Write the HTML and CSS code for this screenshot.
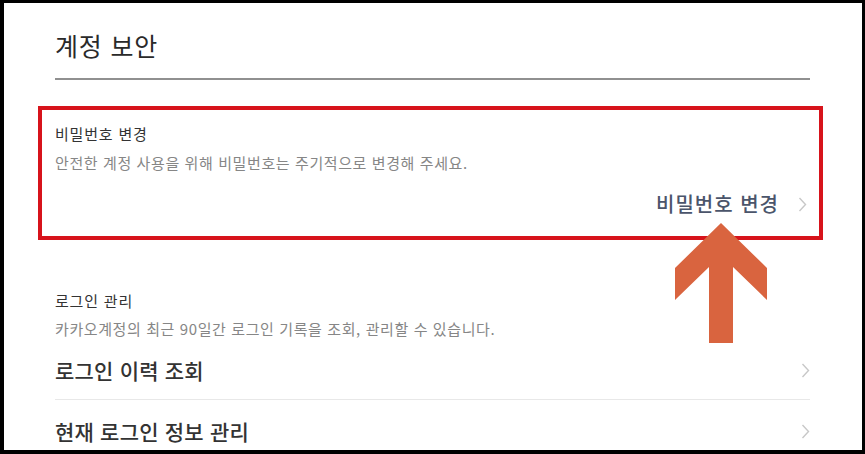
FILE: index.html
```html
<!DOCTYPE html>
<html lang="ko">
<head>
    <meta charset="UTF-8">
    <title>계정 보안</title>
    <link rel="stylesheet" href="styles.css">
</head>
<body>
    <div class="frame">
        <div class="content">
            <h2 class="title">계정 보안</h2>

            <div class="section highlight">
                <div class="label">비밀번호 변경</div>
                <p class="desc">안전한 계정 사용을 위해 비밀번호는 주기적으로 변경해 주세요.</p>
                <a class="link" href="#">
                    <span>비밀번호 변경</span>
                    <svg class="chevron" width="9" height="15" viewBox="0 0 9 15"><polyline points="1.5,1 7.5,7.5 1.5,14"/></svg>
                </a>
            </div>

            <div class="section login">
                <div class="label">로그인 관리</div>
                <p class="desc">카카오계정의 최근 90일간 로그인 기록을 조회, 관리할 수 있습니다.</p>
                <a class="row" href="#">
                    <span>로그인 이력 조회</span>
                    <svg class="chevron" width="9" height="15" viewBox="0 0 9 15"><polyline points="1.5,1 7.5,7.5 1.5,14"/></svg>
                </a>
                <a class="row" href="#">
                    <span>현재 로그인 정보 관리</span>
                    <svg class="chevron" width="9" height="15" viewBox="0 0 9 15"><polyline points="1.5,1 7.5,7.5 1.5,14"/></svg>
                </a>
            </div>
        </div>

        <svg class="arrow" width="92" height="120" viewBox="0 0 92 120">
            <polygon points="46,0 92,45 92,77 58,44 58,120 34,120 34,44 0,77 0,45"/>
        </svg>
    </div>
</body>
</html>
```

FILE: styles.css
```css
body {
    margin: 0;
    background-color: #000;
    font-family: "Noto Sans CJK KR", "Noto Sans", sans-serif;
}

.frame {
    position: relative;
    background: #fff;
    margin: 3px 3px 0 4px;
    height: 447px;
    overflow: hidden;
}

.content {
    padding: 26px 52px 0 51px;
}

.title {
    margin: 0;
    font-size: 25px;
    font-weight: 400;
    letter-spacing: 0.8px;
    line-height: 32px;
    color: #2a2a2a;
    padding-bottom: 17px;
    border-bottom: 2px solid #909090;
}

.section {
    display: flex;
    flex-direction: column;
}

.highlight {
    margin: 26px -13px 0 -17px;
    border: 4px solid #d7131b;
    padding: 14px 12px 19px 13px;
}

.label {
    font-size: 15px;
    letter-spacing: 0.8px;
    line-height: 20px;
    color: #333;
}

.desc {
    margin: 8px 0 0;
    font-size: 15px;
    letter-spacing: 0.6px;
    line-height: 22px;
    color: #868686;
}

.link {
    align-self: flex-end;
    display: flex;
    align-items: center;
    gap: 19px;
    margin-top: 17px;
    font-size: 20px;
    font-weight: 500;
    letter-spacing: 1px;
    line-height: 26px;
    color: #4b556b;
    text-decoration: none;
}

.chevron polyline {
    fill: none;
    stroke: #c8c8c8;
    stroke-width: 1.4;
}

.login {
    margin-top: 51px;
}

.login .desc {
    margin-top: 7px;
}

.row {
    display: flex;
    justify-content: space-between;
    align-items: center;
    padding: 16px 0 15px;
    font-size: 21px;
    font-weight: 500;
    letter-spacing: 0.2px;
    line-height: 28px;
    color: #333;
    text-decoration: none;
    border-bottom: 1px solid #e8e8e8;
}

.row:last-child {
    border-bottom: none;
    padding-top: 17px;
}

.arrow {
    position: absolute;
    left: 671px;
    top: 220px;
}

.arrow polygon {
    fill: #d9643f;
}
```
